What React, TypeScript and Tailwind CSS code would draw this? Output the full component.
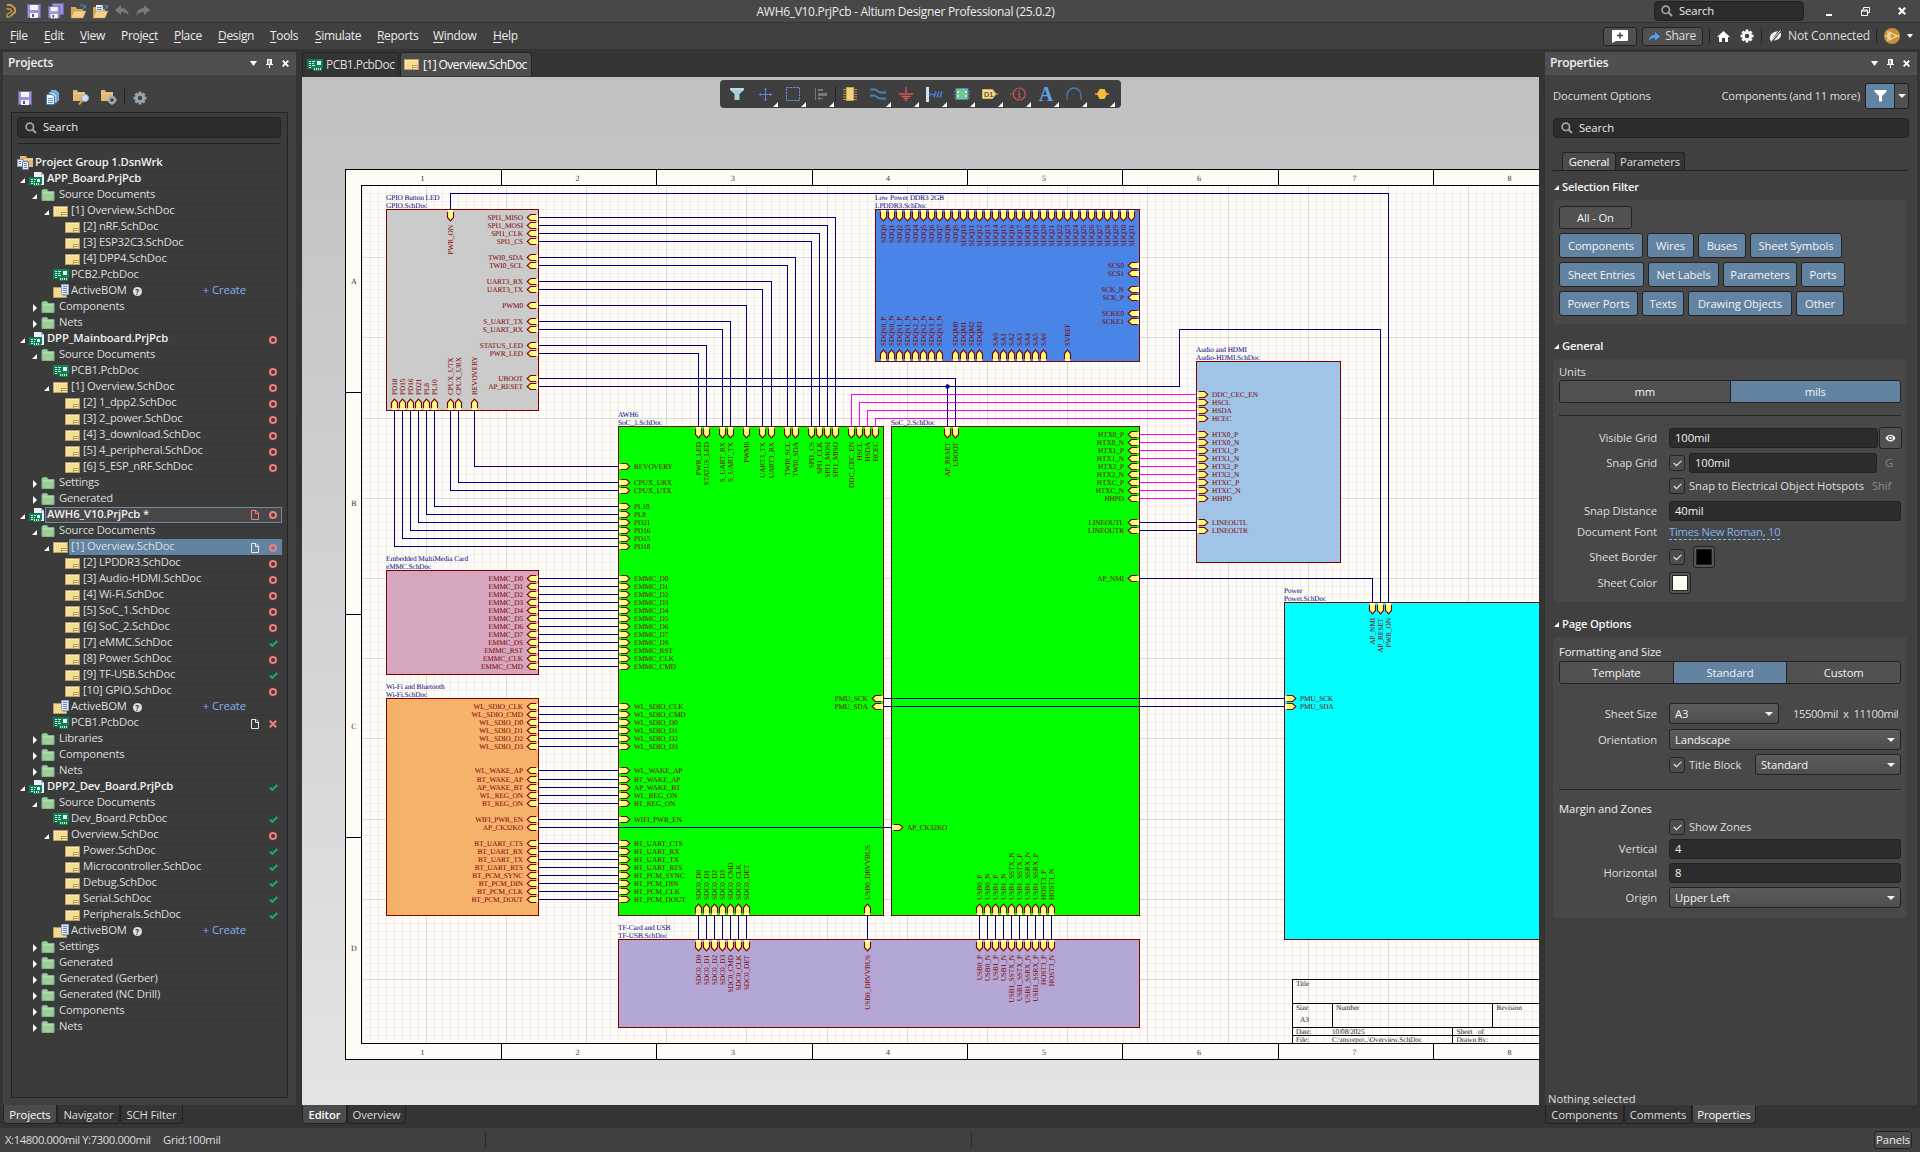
import React from "react";

/* ------------------------------------------------------------------ */
/* Schematic geometry: one unit is 100 mil, origin is the sheet corner */
/* ------------------------------------------------------------------ */
const X = (u: number) => Math.floor(346 + 8.019 * u) + 0.5;
const Y = (v: number) => Math.floor(1059.7 - 8.02 * v) + 0.5;

type Side = "L" | "R" | "T" | "B";
type Pin = [string, number];

const seq = (prefix: string, start: number, step: number, names: string[]): Pin[] =>
  names.map((n, i) => [prefix + n, start + step * i]);

const emmc = seq("EMMC_", 60, -1, ["D0", "D1", "D2", "D3", "D4", "D5", "D6", "D7", "DS", "RST", "CLK", "CMD"]);
const wifi: Pin[] = [
  ...seq("WL_SDIO_", 44, -1, ["CLK", "CMD", "D0", "D1", "D2", "D3"]),
  ["WL_WAKE_AP", 36], ["BT_WAKE_AP", 35], ["AP_WAKE_BT", 34], ["WL_REG_ON", 33], ["BT_REG_ON", 32],
  ["WIFI_PWR_EN", 30],
  ...seq("BT_", 27, -1, ["UART_CTS", "UART_RX", "UART_TX", "UART_RTS", "PCM_SYNC", "PCM_DIN", "PCM_CLK", "PCM_DOUT"]),
];
const hdmiBus: Pin[] = [["DDC_CEC_EN", 83], ["HSCL", 82], ["HSDA", 81], ["HCEC", 80]];
const hdmiTx = seq("", 78, -1, ["HTX0_P", "HTX0_N", "HTX1_P", "HTX1_N", "HTX2_P", "HTX2_N", "HTXC_P", "HTXC_N", "HHPD"]);
const line: Pin[] = [["LINEOUTL", 67], ["LINEOUTR", 66]];
const pmu: Pin[] = [["PMU_SCK", 45], ["PMU_SDA", 44]];
const sdc = seq("SDC0_", 44, 1, ["D0", "D1", "D2", "D3", "CMD", "CLK", "DET"]);
const vbus: Pin = ["USB0_DRVVBUS", 65];
const usb = seq("", 79, 1, ["USB0_P", "USB0_N", "USB1_P", "USB1_N", "USB1_SSTX_N", "USB1_SSTX_P", "USB1_SSRX_N", "USB1_SSRX_P", "HOST3_P", "HOST3_N"]);
const gpioRight: Pin[] = [
  ["SPI1_MISO", 105], ["SPI1_MOSI", 104], ["SPI1_CLK", 103], ["SPI1_CS", 102],
  ["TWI0_SDA", 100], ["TWI0_SCL", 99], ["UART3_RX", 97], ["UART3_TX", 96], ["PWM0", 94],
  ["S_UART_TX", 92], ["S_UART_RX", 91], ["STATUS_LED", 89], ["PWR_LED", 88], ["UBOOT", 85], ["AP_RESET", 84],
];
const gpioBottom: Pin[] = [
  ["PD18", 6], ["PD15", 7], ["PD16", 8], ["PD21", 9], ["PL8", 10], ["PL10", 11],
  ["CPUX_UTX", 13], ["CPUX_URX", 14], ["REVOVERY", 16],
];
const socTop: Pin[] = [
  ["PWR_LED", 44], ["STATUS_LED", 45], ["S_UART_RX", 47], ["S_UART_TX", 48], ["PWM0", 50],
  ["UART3_TX", 52], ["UART3_RX", 53], ["TWI0_SCL", 55], ["TWI0_SDA", 56],
  ["SPI1_CS", 58], ["SPI1_CLK", 59], ["SPI1_MOSI", 60], ["SPI1_MISO", 61],
];
const socLeft: Pin[] = [
  ["REVOVERY", 74], ["CPUX_URX", 72], ["CPUX_UTX", 71], ["PL10", 69], ["PL8", 68],
  ["PD21", 67], ["PD16", 66], ["PD15", 65], ["PD18", 64],
];

interface Block {
  title?: string; file: string; x: [number, number]; y: [number, number]; fill: string;
  pins: Partial<Record<Side, Pin[]>>;
}

const blocks: Block[] = [
  {
    title: "GPIO Button LED", file: "GPIO.SchDoc", x: [5, 24], y: [106, 81], fill: "#cbcbcb",
    pins: { R: gpioRight, T: [["PWR_ON", 13]], B: gpioBottom },
  },
  {
    title: "Low Power DDR3 2GB", file: "LPDDR3.SchDoc", x: [66, 99], y: [106, 87], fill: "#4985e7",
    pins: {
      T: Array.from({ length: 32 }, (_, i): Pin => ["SDQ" + i, 67 + i]),
      R: [["SCS0", 99], ["SCS1", 98], ["SCK_N", 96], ["SCK_P", 95], ["SCKE0", 93], ["SCKE1", 92]],
      B: [
        ...seq("SDQS", 67, 1, ["0_P", "0_N", "1_P", "1_N", "2_P", "2_N", "3_P", "3_N"]),
        ...seq("SDQM", 76, 1, ["0", "1", "2", "3"]),
        ...seq("SA", 81, 1, ["0", "1", "2", "3", "4", "5", "6"]),
        ["SVREF", 90],
      ],
    },
  },
  {
    title: "AWH6", file: "SoC_1.SchDoc", x: [34, 67], y: [79, 18], fill: "#00ff00",
    pins: {
      T: [...socTop, ["DDC_CEC_EN", 63], ["HSCL", 64], ["HSDA", 65], ["HCEC", 66]],
      L: [...socLeft, ...emmc, ...wifi], R: pmu, B: [...sdc, vbus],
    },
  },
  {
    file: "SoC_2.SchDoc", x: [68, 99], y: [79, 18], fill: "#00ff00",
    pins: { T: [["AP_RESET", 75], ["UBOOT", 76]], R: [...hdmiTx, ...line, ["AP_NMI", 60]], L: [["AP_CK32KO", 29]], B: usb },
  },
  {
    title: "Audio and HDMI", file: "Audio-HDMI.SchDoc", x: [106, 124], y: [87, 62], fill: "#9fc4e8",
    pins: { L: [...hdmiBus, ...hdmiTx, ...line] },
  },
  { title: "Embedded MultiMedia Card", file: "eMMC.SchDoc", x: [5, 24], y: [61, 48], fill: "#d5a6bd", pins: { R: emmc } },
  {
    title: "Wi-Fi and Bluetooth", file: "Wi-Fi.SchDoc", x: [5, 24], y: [45, 18], fill: "#f6b26b",
    pins: { R: [...wifi, ["AP_CK32KO", 29]] },
  },
  { title: "TF-Card and USB", file: "TF-USB.SchDoc", x: [34, 99], y: [15, 4], fill: "#b4a7d6", pins: { T: [...sdc, vbus, ...usb] } },
  {
    title: "Power", file: "Power.SchDoc", x: [117, 152], y: [57, 15], fill: "#00ffff",
    pins: { T: [["AP_NMI", 128], ["AP_RESET", 129], ["PWR_ON", 130]], L: pmu },
  },
];

const wire = (pts: number[][]) => pts.map(([u, v], i) => `${i ? "L" : "M"}${X(u)} ${Y(v)}`).join("");

const blueWires: string[] = [
  ...gpioRight.slice(0, 13).map(([n, v]) => wire([[24, v], [socTop.find((p) => p[0] === n)![1], v], [socTop.find((p) => p[0] === n)![1], 79]])),
  ...gpioBottom.map(([n, u]) => wire([[u, 81], [u, socLeft.find((p) => p[0] === n)![1]], [34, socLeft.find((p) => p[0] === n)![1]]])),
  ...[...emmc, ...wifi].map(([, v]) => wire([[24, v], [34, v]])),
  ...[...sdc, vbus, ...usb].map(([, u]) => wire([[u, 18], [u, 15]])),
  ...line.map(([, v]) => wire([[99, v], [106, v]])),
  ...pmu.map(([, v]) => wire([[67, v], [117, v]])),
  wire([[24, 29], [68, 29]]),
  wire([[24, 85], [76, 85], [76, 79]]),
  wire([[24, 84], [104, 84], [104, 91.1], [129, 91.1], [129, 57]]),
  wire([[75, 84], [75, 79]]),
  wire([[13, 106], [13, 108], [130, 108], [130, 57]]),
  wire([[99, 60], [128, 60], [128, 57]]),
];
const pinkWires: string[] = [
  ...hdmiBus.map(([, v], i) => wire([[106, v], [63 + i, v], [63 + i, 79]])),
  ...hdmiTx.map(([, v]) => wire([[99, v], [106, v]])),
];

function Entry({ side, name, pos, edge }: { side: Side; name: string; pos: number; edge: number }) {
  const horizontal = side === "L" || side === "R";
  const e = horizontal ? X(edge) : Y(edge);
  const p = horizontal ? Y(pos) : X(pos);
  const s = side === "L" || side === "T" ? 1 : -1;
  const pt = (along: number, across: number) =>
    horizontal ? `${e + s * along} ${p + across}` : `${p + across} ${e + s * along}`;
  const d = `M${pt(2.5, -3)}L${pt(8, -3)}L${pt(11.3, 0)}L${pt(8, 3)}L${pt(2.5, 3)}`;
  return (
    <g>
      <path d={`M${pt(0.5, 0)}L${pt(3, 0)}`} stroke="#ffff80" strokeWidth="5" />
      <path d={`M${pt(1, -2.5)}L${pt(1, 2.5)}`} stroke="#fff" />
      <path d={d} fill="#ffff80" stroke="#800000" strokeWidth="1.15" />
      {horizontal ? (
        <text x={e + s * 15.5} y={p + 2.5} textAnchor={s > 0 ? "start" : "end"} fill="#800000">{name}</text>
      ) : (
        <text transform={`translate(${p + 2.7} ${e + s * 15.5}) rotate(-90)`} textAnchor={s > 0 ? "end" : "start"} fill="#800000">{name}</text>
      )}
    </g>
  );
}

function Schematic() {
  const cols = [501.5, 656.5, 812.5, 967.5, 1122.5, 1278.5, 1433.5];
  const rows = [392.5, 614.5, 837.5];
  const minor: string[] = [];
  const major: string[] = [];
  for (let u = 2; u < 149; u++) (u % 10 ? minor : major).push(`M${X(u)} 186V1043`);
  for (let v = 3; v < 109; v++) (v % 10 ? minor : major).push(`M362 ${Y(v)}H1540`);
  return (
    <svg width="1237" height="1028" viewBox="302 77 1237 1028" className="block" fontFamily="'Liberation Serif', serif" fontSize="7.35" textRendering="geometricPrecision">
      <rect x="345" y="169" width="1260" height="891" fill="#fffcf8" />
      <g shapeRendering="crispEdges" fill="none">
        <path d={minor.join("")} stroke="#efeeea" />
        <path d={major.join("")} stroke="#dbdad6" />
        <path d="M1600 169.5H345.5V1059.5H1600M1600 185.5H361.5V1043.5H1600" stroke="#000" />
        <path d={cols.map((c) => `M${c} 169V186M${c} 1043V1060`).join("") + rows.map((r) => `M345 ${r}H362`).join("")} stroke="#000" />
      </g>
      <g fill="#333" fontSize="8" textAnchor="middle">
        {[422.5, 577.5, 733, 888, 1044, 1199, 1354.5, 1509.5].map((x, i) => (
          <g key={i}>
            <text x={x} y="180.5">{i + 1}</text>
            <text x={x} y="1054.5">{i + 1}</text>
          </g>
        ))}
        {[283.5, 506, 728.5, 951].map((y, i) => (
          <text key={i} x="353.8" y={y}>{"ABCD"[i]}</text>
        ))}
      </g>
      <g shapeRendering="crispEdges">
        {blocks.map((b) => (
          <rect key={b.file} x={X(b.x[0])} y={Y(b.y[0])} width={X(b.x[1]) - X(b.x[0])} height={Y(b.y[1]) - Y(b.y[0])} fill={b.fill} stroke="#800000" />
        ))}
      </g>
      <g shapeRendering="crispEdges" fill="none">
        <path d={blueWires.join("")} stroke="#000080" />
        <path d={pinkWires.join("")} stroke="#ff00ff" />
      </g>
      <circle cx={X(75)} cy={Y(84)} r="2.2" fill="#000080" />
      {blocks.map((b) => (
        <g key={b.file}>
          {b.title && <text x={X(b.x[0]) - 0.5} y={Y(b.y[0]) - 9.5} fill="#000080">{b.title}</text>}
          <text x={X(b.x[0]) - 0.5} y={Y(b.y[0]) - 1.7} fill="#000080">{b.file}</text>
          {(Object.keys(b.pins) as Side[]).map((side) =>
            b.pins[side]!.map(([name, pos]) => (
              <Entry key={side + pos} side={side} name={name} pos={pos} edge={side === "L" ? b.x[0] : side === "R" ? b.x[1] : side === "T" ? b.y[0] : b.y[1]} />
            ))
          )}
        </g>
      ))}
      <path
        shapeRendering="crispEdges"
        fill="none"
        stroke="#000"
        d="M1292.5 1043V979.5H1540M1292 1003.5H1540M1292 1027.5H1540M1292 1035.5H1540M1332.5 1003V1027M1492.5 1003V1027M1452.5 1027V1043"
      />
      <g fill="#222">
        <text x="1296" y="986">Title</text>
        <text x="1296" y="1010">Size</text>
        <text x="1300" y="1022">A3</text>
        <text x="1336" y="1010">Number</text>
        <text x="1496.5" y="1010">Revision</text>
        <text x="1296" y="1034">Date:</text>
        <text x="1332" y="1034">10/08/2025</text>
        <text x="1456.5" y="1034">Sheet</text>
        <text x="1478" y="1034">of</text>
        <text x="1296" y="1042">File:</text>
        <text x="1332" y="1042">C:\myrepo\..\Overview.SchDoc</text>
        <text x="1456.5" y="1042">Drawn By:</text>
      </g>
    </svg>
  );
}

/* ------------------------------- icons ------------------------------- */
const Svg = ({ w, h, children, className = "" }: { w: number; h: number; children: React.ReactNode; className?: string }) => (
  <svg width={w} height={h} viewBox={`0 0 ${w} ${h}`} className={"block shrink-0 " + className}>{children}</svg>
);

const SchIcon = () => (
  <Svg w={15} h={11}>
    <rect x=".5" y=".5" width="14" height="10" fill="#f5dc8e" stroke="#b79d63" />
    <path d="M1.5 9.5V1.5H13.5" fill="none" stroke="#fdeeb8" />
    <path d="M8 6H15V11H8Z" fill="#b79d63" />
    <path d="M9 7.5H14M9 9.5H14" stroke="#fbe7a4" />
  </Svg>
);
const PcbIcon = () => (
  <Svg w={16} h={12}>
    <path d="M0 0H16V9H15V12H6V10H0Z" fill="#0c8053" />
    <path d="M2 2.5H4M2 4.5H4M2 6.5H4M2 8.5H4M5 2.5H8M5 4.5H7M5 6.5H8" stroke="#d8f0e4" />
    <path d="M10 2H14V6H10Z" fill="#e6f4ee" />
    <path d="M7.5 9V11M9.5 9V11M11.5 9V11M13.5 9V11" stroke="#e0ead0" />
  </Svg>
);
const PrjIcon = () => (
  <Svg w={16} h={14}>
    <path d="M5 0H12L15 3V13H5Z" fill="#e9eef8" />
    <path d="M12 0V3H15Z" fill="#aab6d4" />
    <path d="M0 5H13V12H12V14H4V13H0Z" fill="#0c8053" />
    <path d="M2 7.5H4M2 9.5H4M2 11.5H4M5 7.5H7M5 9.5H6" stroke="#d8f0e4" />
    <path d="M8 7H11V10H8Z" fill="#e6f4ee" />
    <path d="M5.5 11V13M7.5 11V13M9.5 11V13" stroke="#e0ead0" />
  </Svg>
);
const FolderIcon = () => (
  <Svg w={14} h={12}>
    <path d="M1 11.5V1.5L2 .5H6L7 2.5H13V11.5Z" fill="#9bcf95" stroke="#7db58c" />
    <path d="M1.5 4H12.5" stroke="#bfe3b6" />
  </Svg>
);
const BomIcon = () => (
  <Svg w={16} h={14}>
    <path d="M.5 3.5H13.5V13.5H.5Z" fill="#f3d98b" stroke="#b79d63" />
    <path d="M9.5 11.5H13" stroke="#b79d63" />
    <path d="M8.5 .5H15.5V10.5H8.5Z" fill="#dfe8f8" stroke="#8ea3cc" />
    <path d="M10 2.5H14M10 4.5H14M10 6.5H14M10 8.5H14" stroke="#6f87b8" />
  </Svg>
);
const GroupIcon = () => (
  <Svg w={16} h={14}>
    <path d="M3 0H9L10 2H16V11H3Z" fill="#e3b872" />
    <path d="M3 3.5H16" stroke="#f4d79c" />
    <path d="M.5 3.5H6.5V10.5H.5Z" fill="#e6ebf6" stroke="#8b97b6" />
    <path d="M5.5 5.5H11.5V13.5H5.5Z" fill="#e6ebf6" stroke="#6c7ba2" />
    <path d="M7 7.5H10M7 9.5H10M7 11.5H10M2 5.5H4M2 7.5H4" stroke="#6c7ba2" />
  </Svg>
);
const Down = () => (<Svg w={5} h={5}><path d="M5 0V5H0Z" fill="#fff" /></Svg>);
const Right = () => (<Svg w={5} h={8}><path d="M1 0L5 4L1 8Z" fill="#fff" /></Svg>);
const Caret = () => (<Svg w={8} h={4}><path d="M0 0H8L4 4Z" fill="#f2f2f2" /></Svg>);
const Magnifier = () => (
  <Svg w={12} h={12}>
    <circle cx="4.8" cy="4.8" r="3.7" fill="none" stroke="#a4a4a4" strokeWidth="1.7" />
    <path d="M7.6 7.6L11 11" stroke="#a4a4a4" strokeWidth="2" />
  </Svg>
);
const FloppyBody = () => (
  <>
    <rect x=".5" y=".5" width="13" height="13" fill="#9a94d6" stroke="#6f6aa6" />
    <rect x="3" y="1" width="8" height="5" fill="#f4f4fa" />
    <rect x="3" y="9" width="8" height="5" fill="#f4f4fa" />
    <rect x="5" y="10" width="2" height="3" fill="#55507e" />
  </>
);
const Floppy = () => (<Svg w={14} h={14}><FloppyBody /></Svg>);
const Floppies = () => (
  <Svg w={16} h={16}>
    <rect x="4.5" y=".5" width="11" height="11" fill="#9a94d6" stroke="#6f6aa6" />
    <g transform="translate(0 3) scale(.88)"><FloppyBody /></g>
  </Svg>
);
const OpenFolder = ({ doc }: { doc?: boolean }) => (
  <Svg w={17} h={15}>
    <path d="M1 14V3H6L7 5H13V14Z" fill="#d9a95a" />
    {doc && <path d="M4 1H11V10H4Z" fill="#e8edf8" />}
    {doc && <path d="M5 3.5H10M5 5.5H10" stroke="#6c7ba2" />}
    <path d="M1 14L4 7H16L13 14Z" fill="#f6d38d" stroke="#c08f44" strokeWidth=".6" />
    <path d="M10 1.5C12 .5 14 1 15 3.5M15.500 1V4H12.5" fill="none" stroke="#4d8bc4" />
  </Svg>
);
const Undo = ({ flip }: { flip?: boolean }) => (
  <Svg w={14} h={12} className={flip ? "-scale-x-100" : ""}>
    <path d="M0 5L6 0V3C11 3 13.500 6 13.500 11C12 8 10 7 6 7V10Z" fill="#7a7a7a" />
  </Svg>
);
const Logo = () => (
  <Svg w={12} h={16}>
    <path d="M2 2H6L10 5.500V9L5 13.500" fill="none" stroke="#c29a4c" strokeWidth="2" />
    <path d="M1.500 6H5.500L7 8L2 11.500V14H4.500" fill="none" stroke="#c29a4c" strokeWidth="1.300" />
  </Svg>
);
const Gear = ({ color = "#f4f4f4", hole = "#404040" }: { color?: string; hole?: string }) => (
  <Svg w={14} h={14}>
    <g fill={color}>
      <circle cx="7" cy="7" r="5" />
      {[0, 45, 90, 135].map((a) => <rect key={a} x="5.600" y=".5" width="2.800" height="13" transform={`rotate(${a} 7 7)`} />)}
    </g>
    <circle cx="7" cy="7" r="2.200" fill={hole} />
  </Svg>
);
const Pages = () => (
  <Svg w={14} h={15}>
    <path d="M5 0H10L13 3V11H5Z" fill="#7db0e0" />
    <path d="M3 2H8L11 5V13H3Z" fill="#a9cdf0" stroke="#3d6ea8" strokeWidth=".6" />
    <path d="M.5 4.500H6L8.500 7V14.500H.5Z" fill="#eef5fc" stroke="#3d78b8" />
    <path d="M2 8.500H7M2 10.500H7M2 12.500H7" stroke="#5d92c8" />
  </Svg>
);
const FolderTool = ({ gear }: { gear?: boolean }) => (
  <Svg w={16} h={15}>
    <path d="M0 0H4L5 2H12V11H0Z" fill="#dfb871" />
    <path d="M0 3.500H12" stroke="#efd096" />
    {gear ? (
      <>
        <circle cx="11" cy="10" r="3" fill="#555" stroke="#9fb0b8" strokeWidth="2" />
        <path d="M11 5V15M6 10H16" stroke="#9fb0b8" strokeWidth="1.200" />
        <circle cx="11" cy="10" r="1.600" fill="#3c3c3c" />
      </>
    ) : (
      <>
        <path d="M9.500 10.500L6 14.500" stroke="#d8a04a" strokeWidth="2" />
        <circle cx="12" cy="8" r="3.600" fill="#cfe0f0" stroke="#8fa8c0" />
      </>
    )}
  </Svg>
);
const PinIcon = () => (<Svg w={7} h={9}><path d="M1 0H6V5H7V6H4V9H3V6H0V5H1Z" fill="#fff" /><path d="M3 1V5" stroke="#4f4f4f" /></Svg>);
const Cross = ({ size = 7, color = "#fff" }: { size?: number; color?: string }) => (
  <svg width={size} height={size} viewBox="0 0 7 7" className="block shrink-0"><path d="M.7 .7L6.300 6.300M6.300 .7L.7 6.300" stroke={color} strokeWidth="1.900" /></svg>
);
const Ring = () => (<Svg w={8} h={8}><circle cx="4" cy="4" r="3" fill="none" stroke="#f47c7c" strokeWidth="2" /></Svg>);
const Tick = () => (<Svg w={9} h={7}><path d="M.8 3.500L3.300 5.800L8.200 1" fill="none" stroke="#12b35b" strokeWidth="2" /></Svg>);
const Page = ({ color }: { color: string }) => (
  <Svg w={8} h={10}><path d="M.5 .5H5L7.500 3V9.500H.5ZM4.500 .5V3.500H7.500" fill="none" stroke={color} /></Svg>
);
const Funnel = ({ color = "#fff" }: { color?: string }) => (<Svg w={13} h={12}><path d="M.5 0H12.500V1.500L8 6V11.500H5V6L.5 1.500Z" fill={color} /></Svg>);
const CheckMark = () => (<Svg w={9} h={7}><path d="M.8 3L3.500 5.700L8.300 .9" fill="none" stroke="#e8e8e8" strokeWidth="1.200" /></Svg>);

/* ---------------------------- project tree ---------------------------- */
type Kind = "group" | "prj" | "folder" | "sch" | "pcb" | "bom";
interface Node { n: number; k: Kind; t: string; s?: "o" | "v" | "x"; a?: "d" | "r"; page?: string; sel?: "outline" | "fill" }

const S = (n: number, t: string, s?: Node["s"], extra: Partial<Node> = {}): Node => ({ n, k: "sch", t, s, ...extra });
const F = (t: string, a: "d" | "r" = "r"): Node => ({ n: 2, k: "folder", t, a });
const BOM: Node = { n: 3, k: "bom", t: "ActiveBOM" };

const tree: Node[] = [
  { n: 0, k: "group", t: "Project Group 1.DsnWrk" },
  { n: 1, k: "prj", t: "APP_Board.PrjPcb", a: "d" },
  F("Source Documents", "d"),
  S(3, "[1] Overview.SchDoc", undefined, { a: "d" }),
  S(4, "[2] nRF.SchDoc"), S(4, "[3] ESP32C3.SchDoc"), S(4, "[4] DPP4.SchDoc"),
  { n: 3, k: "pcb", t: "PCB2.PcbDoc" },
  BOM, F("Components"), F("Nets"),
  { n: 1, k: "prj", t: "DPP_Mainboard.PrjPcb", a: "d", s: "o" },
  F("Source Documents", "d"),
  { n: 3, k: "pcb", t: "PCB1.PcbDoc", s: "o" },
  S(3, "[1] Overview.SchDoc", "o", { a: "d" }),
  S(4, "[2] 1_dpp2.SchDoc", "o"), S(4, "[3] 2_power.SchDoc", "o"), S(4, "[4] 3_download.SchDoc", "o"),
  S(4, "[5] 4_peripheral.SchDoc", "o"), S(4, "[6] 5_ESP_nRF.SchDoc", "o"),
  F("Settings"), F("Generated"),
  { n: 1, k: "prj", t: "AWH6_V10.PrjPcb *", a: "d", s: "o", page: "#f47c7c", sel: "outline" },
  F("Source Documents", "d"),
  S(3, "[1] Overview.SchDoc", "o", { a: "d", page: "#e8e8e8", sel: "fill" }),
  S(4, "[2] LPDDR3.SchDoc", "o"), S(4, "[3] Audio-HDMI.SchDoc", "o"), S(4, "[4] Wi-Fi.SchDoc", "o"),
  S(4, "[5] SoC_1.SchDoc", "o"), S(4, "[6] SoC_2.SchDoc", "o"), S(4, "[7] eMMC.SchDoc", "v"),
  S(4, "[8] Power.SchDoc", "o"), S(4, "[9] TF-USB.SchDoc", "v"), S(4, "[10] GPIO.SchDoc", "o"),
  BOM,
  { n: 3, k: "pcb", t: "PCB1.PcbDoc", s: "x", page: "#e8e8e8" },
  F("Libraries"), F("Components"), F("Nets"),
  { n: 1, k: "prj", t: "DPP2_Dev_Board.PrjPcb", a: "d", s: "v" },
  F("Source Documents", "d"),
  { n: 3, k: "pcb", t: "Dev_Board.PcbDoc", s: "v" },
  S(3, "Overview.SchDoc", "o", { a: "d" }),
  S(4, "Power.SchDoc", "v"), S(4, "Microcontroller.SchDoc", "v"), S(4, "Debug.SchDoc", "v"),
  S(4, "Serial.SchDoc", "v"), S(4, "Peripherals.SchDoc", "v"),
  BOM, F("Settings"), F("Generated"), F("Generated (Gerber)"), F("Generated (NC Drill)"), F("Components"), F("Nets"),
];

const indent = ["pl-[5px]", "pl-2", "pl-5", "pl-8", "pl-11"];
const icons: Record<Kind, React.ReactNode> = {
  group: <GroupIcon />, prj: <PrjIcon />, folder: <FolderIcon />, sch: <SchIcon />, pcb: <PcbIcon />, bom: <BomIcon />,
};

function TreeRow({ node, first }: { node: Node; first: boolean }) {
  const bold = node.k === "group" || node.k === "prj";
  const look =
    node.sel === "fill" ? "border-t border-[#6383a3] bg-[#6383a3]" :
    node.sel === "outline" ? "border border-[#6c8caa] bg-[#484848]" :
    first ? "border-t border-transparent" : "border-t border-[#343434]";
  return (
    <div className={"flex h-4 items-center " + indent[node.n]}>
      {node.n > 0 && <span className="flex w-[9px] shrink-0 pt-[2px]">{node.a === "d" ? <Down /> : node.a === "r" ? <Right /> : null}</span>}
      <span className="w-4 shrink-0">{icons[node.k]}</span>
      <div className={"mr-[5px] flex h-4 min-w-0 flex-1 items-center " + (node.sel === "outline" ? "pl-px " : "pl-[2px] ") + look}>
        <span className={"-mt-[3px] leading-4 " + (bold ? "font-semibold text-[#f0f0f0] tracking-[-0.13px]" : "tracking-[-0.2px]")}>{node.t}</span>
        {node.k === "bom" && (
          <>
            <span className="ml-1.5 flex size-[9px] items-center justify-center rounded-full bg-[#e0e0e0] text-[8px] font-bold leading-none text-[#333]">?</span>
            <span className="-mt-[3px] ml-auto mr-9 leading-4 text-[#7fb4ee]">+&nbsp;Create</span>
          </>
        )}
        {node.s && (
          <span className="ml-auto flex items-center">
            {node.page && <Page color={node.page} />}
            <span className={"ml-2 flex w-[12px] justify-center " + (node.sel === "outline" ? "mr-[2px]" : "mr-[3px]")}>
              {node.s === "o" ? <Ring /> : node.s === "v" ? <Tick /> : <Cross size={8} color="#f47c7c" />}
            </span>
          </span>
        )}
      </div>
    </div>
  );
}

/* ------------------------------- panels ------------------------------- */
const PanelHeader = ({ title }: { title: string }) => (
  <div className="flex h-[23px] shrink-0 items-center bg-[#4f4f4f] pl-[5px] pr-[7px] font-semibold text-[#f0f0f0]">
    <span className="-mt-[2px] text-[12px] tracking-[-0.2px]">{title}</span>
    <span className="ml-auto flex items-center gap-[9px]">
      <Svg w={7} h={5}><path d="M0 0H7L3.500 5Z" fill="#fff" /></Svg>
      <PinIcon />
      <Cross />
    </span>
  </div>
);

const BottomTabs = ({ tabs, active }: { tabs: [string, string][]; active: number }) => (
  <div className="flex h-5 shrink-0">
    {tabs.map(([t, w], i) => (
      <span key={t} className={"flex h-[19px] items-center justify-center rounded-b border border-t-0 border-[#222] pt-[2px] leading-none " + w + (i === active ? " bg-[#4b4b4b] text-white" : " bg-[#343434]")}>
        {t}
      </span>
    ))}
  </div>
);

const SearchBox = ({ className }: { className: string }) => (
  <div className={"flex items-center rounded border border-[#222] bg-[#2c2c2c] " + className}>
    <Magnifier />
    <span className="-mt-px ml-[6px] text-[#ececec]">Search</span>
  </div>
);

function ProjectsPanel() {
  return (
    <div className="flex w-[293px] shrink-0 flex-col">
      <div className="flex h-[1053px] flex-col bg-[#404040]">
        <PanelHeader title="Projects" />
        <div className="flex h-[30px] shrink-0 items-end pl-[15px]">
          <Floppy />
          <span className="ml-[14px]"><Pages /></span>
          <span className="ml-[13px]"><FolderTool /></span>
          <span className="ml-3"><FolderTool gear /></span>
          <span className="mx-[7px] h-4 w-px bg-[#242424]" />
          <span className="ml-px"><Gear color="#98a4ac" hole="#404040" /></span>
        </div>
        <div className="ml-2 mr-2 mt-[7px] h-[986px] w-[277px] shrink-0 border border-[#232323] bg-[#3b3b3b]">
          <SearchBox className="mx-[5px] mt-1 h-[21px] w-[264px] pl-[7px]" />
          <div className="mx-[6px] mb-[11px] mt-[5px] h-px bg-[#222]" />
          {tree.map((n, i) => <TreeRow key={i} node={n} first={i === 0} />)}
        </div>
      </div>
      <BottomTabs tabs={[["Projects", "w-[54px]"], ["Navigator", "w-[63px]"], ["SCH Filter", "w-[63px]"]]} active={0} />
    </div>
  );
}

/* ------------------------------- toolbar ------------------------------- */
const tools: React.ReactNode[] = [
  <Svg w={14} h={12}><path d="M0 0H14V2L9.500 6V12H4.500V6L0 2Z" fill="#a9d0d8" /><path d="M1 1H13" stroke="#d6eef2" /></Svg>,
  <Svg w={13} h={13}><path d="M6.500 0V13M0 6.500H13" stroke="#5b8cd8" /><path d="M5 2L6.500 .5L8 2M5 11L6.500 12.500L8 11M2 5L.5 6.500L2 8M11 5L12.500 6.500L11 8" fill="none" stroke="#5b8cd8" strokeWidth=".7" /></Svg>,
  <Svg w={14} h={14}><rect x=".5" y=".5" width="13" height="13" fill="none" stroke="#6f98e4" strokeDasharray="2.200 1.050" /></Svg>,
  <Svg w={14} h={14}><path d="M1.500 1V13" stroke="#7a7a7a" /><path d="M4 2H9V4H4ZM4 6H13V9H4Z" fill="#7a7a7a" /><path d="M4 11.500H9M6 10L4 11.500L6 13" fill="none" stroke="#7a7a7a" /></Svg>,
  <Svg w={14} h={14}><path d="M0 2.500H14M0 5H14M0 7.500H14M0 10H14M0 12.500H14" stroke="#b0945a" /><rect x="3.500" y=".5" width="7" height="13" fill="#f2d27c" stroke="#c9a64e" /></Svg>,
  <Svg w={16} h={12}><path d="M0 1.500H5C7 1.500 8 4.500 10 4.500H16M0 7.500H4C6 7.500 8 10.500 10 10.500H16" fill="none" stroke="#4c80b4" strokeWidth="1.800" /></Svg>,
  <Svg w={16} h={14}><path d="M8 0V6M1 7H15M3.500 9.500H12.500M5.500 11.500H10.500M7 13.500H9" stroke="#d95a50" strokeWidth="1.300" /></Svg>,
  <Svg w={17} h={15}><path d="M0 0H3V15H0Z" fill="#cfe0fa" /><path d="M3 6C5 6 4 7.500 6 7.500C4 7.500 5 9 3 9M6 7.500H8" fill="none" stroke="#5b8cd8" /><path d="M8 10.500L10 4.500M11 10.500L13 4.500M14 10.500L16 4.500" stroke="#4a7de0" strokeWidth="1.500" /></Svg>,
  <Svg w={16} h={12}><path d="M0 3.500H16M0 6.500H16M0 9.500H16" stroke="#4f7ec8" /><rect x="2" y=".5" width="12" height="11" fill="#6fc896" stroke="#4f86c8" /><path d="M3 3H5V5H3ZM3 7H5V9H3ZM11 3H13V5H11ZM11 7H13V9H11Z" fill="#f0e67c" /></Svg>,
  <Svg w={16} h={10}><path d="M.5 .5H10.500L14 5L10.500 9.500H.5Z" fill="#f2dc9c" stroke="#d2b25c" /><path d="M14 5H16" stroke="#d2b25c" /><text x="2" y="7.800" fontSize="7.500" fontWeight="700" fontFamily="Liberation Sans, sans-serif" fill="#7a5a1c">D1</text></Svg>,
  <Svg w={16} h={14}><path d="M0 7H3" stroke="#cc5252" /><circle cx="9.300" cy="7" r="6" fill="none" stroke="#cc5252" strokeWidth="1.200" /><path d="M9.300 3V4.500M9.300 6V10.500M8 10.500H10.800M8 6H9.300" stroke="#cc5252" strokeWidth="1.200" /></Svg>,
  <span className="font-['Liberation_Serif',serif] text-[20px] font-bold leading-[14px] tracking-normal text-[#62a4ec]">A</span>,
  <Svg w={16} h={14}><path d="M1 12.500V8.500A7 7.500 0 0 1 15 8.500V12.500" fill="none" stroke="#4a7cb0" strokeWidth="1.300" /></Svg>,
  <Svg w={14} h={12}><path d="M0 6H14" stroke="#e07c2c" strokeWidth="2" /><path d="M4.500 1H9.500L12 6L9.500 11H4.500L2 6Z" fill="#f6bc42" /></Svg>,
];

const Toolbar = () => (
  <div className="absolute left-[418px] top-[3px] flex h-7 w-[401px] items-center rounded bg-[#3f3f3f] pl-[3px]">
    {tools.map((icon, i) => (
      <React.Fragment key={i}>
        {i === 4 && <span className="h-4 w-px bg-[#222]" />}
        <span className="relative flex h-7 w-7 items-center justify-center">
          {icon}
          {i !== 0 && i !== 4 && <span className="absolute bottom-[1px] right-[1px]"><Down /></span>}
        </span>
      </React.Fragment>
    ))}
  </div>
);

/* ---------------------------- properties form ---------------------------- */
const Chip = ({ t, w }: { t: string; w: string }) => (
  <span className={"flex h-[25px] items-center justify-center rounded-[3px] border border-[#222] bg-[#6383a3] text-[#f2f2f2] " + w}>{t}</span>
);
const Section = ({ t, className }: { t: string; className: string }) => (
  <div className={"flex shrink-0 items-center pl-[1px] font-semibold text-[#f4f4f4] " + className}>
    <Down />
    <span className="ml-[3px] tracking-[-0.22px]">{t}</span>
  </div>
);
const Row = ({ label, className, children }: { label?: string; className: string; children: React.ReactNode }) => (
  <div className={"flex items-center " + className}>
    <span className="w-[98px] shrink-0 text-right">{label}</span>
    <span className="w-3 shrink-0" />
    {children}
  </div>
);
const Input = ({ v, w }: { v: string; w: string }) => (
  <span className={"flex h-5 items-center rounded-[3px] border border-[#222] bg-[#2c2c2c] pl-[5px] text-[#f0f0f0] " + w}>{v}</span>
);
const Select = ({ v, w }: { v: string; w: string }) => (
  <span className={"flex h-[21px] items-center justify-between rounded-[3px] border border-[#222] bg-gradient-to-b from-[#5c5c5c] to-[#4e4e4e] pl-[5px] pr-[5px] text-[#f4f4f4] " + w}>
    {v}<Caret />
  </span>
);
const Check = () => (
  <span className="flex size-4 shrink-0 items-center justify-center rounded-[3px] border border-[#242424] bg-[#4d4d4d]"><CheckMark /></span>
);
const Swatch = ({ c }: { c: string }) => (
  <span className="flex size-[22px] items-center justify-center rounded-[3px] border border-[#222] bg-[#555]">
    <span className={"size-4 border border-[#222] " + c} />
  </span>
);
const Segments = ({ items, active, className }: { items: string[]; active: number; className: string }) => (
  <div className={"flex w-[342px] overflow-hidden rounded-[3px] border border-[#222] " + className}>
    {items.map((t, i) => (
      <span key={t} className={"flex flex-1 items-center justify-center text-[#f4f4f4] " + (i ? "border-l border-[#222] " : "") + (i === active ? "bg-[#6383a3]" : "bg-[#515151]")}>{t}</span>
    ))}
  </div>
);

function PropertiesPanel() {
  return (
    <div className="flex w-[372px] shrink-0 flex-col">
      <div className="flex h-[1053px] flex-col bg-[#404040]">
        <PanelHeader title="Properties" />
        <div className="mt-2 flex h-[26px] shrink-0 items-center pl-2 pr-2">
          <span>Document Options</span>
          <span className="ml-auto mr-[5px] tracking-[-0.22px]">Components (and 11 more)</span>
          <span className="flex h-[26px] w-[30px] items-center justify-center rounded-l-[3px] border border-[#222] bg-[#6383a3]"><Funnel /></span>
          <span className="flex h-[26px] w-[14px] items-center justify-center rounded-r-[3px] border border-l-0 border-[#222] bg-[#505050]"><Caret /></span>
        </div>
        <SearchBox className="ml-2 mt-[9px] h-5 w-[356px] shrink-0 pl-[7px]" />
        <div className="ml-2 mt-[14px] flex h-[19px] w-[354px] shrink-0 border-b border-[#222] pl-[9px]">
          <span className="flex w-[54px] items-center justify-center rounded-t-[3px] border border-b-0 border-[#222] bg-[#4b4b4b] text-white">General</span>
          <span className="-ml-px flex w-[70px] items-center justify-center rounded-t-[3px] border border-b-0 border-[#222] bg-[#343434]">Parameters</span>
        </div>

        <Section t="Selection Filter" className="ml-2 mt-[7px] h-[18px]" />
        <div className="ml-2 mt-[4px] flex h-[124px] w-[354px] shrink-0 flex-col gap-1 rounded bg-[#484848] pl-[6px] pt-[6px] tracking-[-0.14px]">
          <span className="flex h-[23px] w-[73px] items-center justify-center rounded-[3px] border border-[#222] bg-[#515151] text-[#f4f4f4]">All - On</span>
          <div className="flex gap-1">
            <Chip t="Components" w="w-[84px]" /><Chip t="Wires" w="w-[47px]" /><Chip t="Buses" w="w-[48px]" /><Chip t="Sheet Symbols" w="w-[92px]" />
          </div>
          <div className="flex gap-1">
            <Chip t="Sheet Entries" w="w-[85px]" /><Chip t="Net Labels" w="w-[71px]" /><Chip t="Parameters" w="w-[74px]" /><Chip t="Ports" w="w-[44px]" />
          </div>
          <div className="flex gap-1">
            <Chip t="Power Ports" w="w-[79px]" /><Chip t="Texts" w="w-[42px]" /><Chip t="Drawing Objects" w="w-[104px]" /><Chip t="Other" w="w-[48px]" />
          </div>
        </div>

        <Section t="General" className="ml-2 mt-[13px] h-[18px]" />
        <div className="ml-2 mt-[4px] h-[243px] w-[354px] shrink-0 rounded bg-[#484848] pl-[6px] pt-[6px]">
          <div className="h-[15px] leading-[14px]">Units</div>
          <Segments items={["mm", "mils"]} active={1} className="h-[23px]" />
          <div className="mt-[12px] h-px w-[342px] bg-[#262626]" />
          <Row label="Visible Grid" className="mt-[11px] h-[22px]">
            <Input v="100mil" w="w-[209px]" />
            <span className="ml-[1px] flex h-[22px] w-[23px] items-center justify-center rounded-[3px] border border-[#222] bg-[#515151]">
              <Svg w={11} h={8}><path d="M.5 4C3-.5 8-.5 10.500 4C8 8.500 3 8.500 .5 4Z" fill="#fff" /><circle cx="5.500" cy="4" r="2.300" fill="#444" /><circle cx="5.500" cy="4" r="1.200" fill="#fff" /></Svg>
            </span>
          </Row>
          <Row label="Snap Grid" className="mt-1 h-5">
            <Check />
            <span className="w-1" />
            <Input v="100mil" w="w-[188px]" />
            <span className="ml-2 text-[#8a8a8a]">G</span>
          </Row>
          <Row className="mt-[5px] h-4">
            <Check />
            <span className="ml-1 whitespace-nowrap tracking-[-0.06px]">Snap to Electrical Object Hotspots</span>
            <span className="ml-2 text-[#8a8a8a]">Shif</span>
          </Row>
          <Row label="Snap Distance" className="mt-[7px] h-5"><Input v="40mil" w="w-[232px]" /></Row>
          <Row label="Document Font" className="mt-[3px] h-4">
            <span className="border-b border-dashed border-[#7fb4ee] leading-[14px] tracking-[-0.27px] text-[#7fb4ee]">Times New Roman, 10</span>
          </Row>
          <Row label="Sheet Border" className="mt-[6px] h-[22px]">
            <Check />
            <span className="w-2" />
            <Swatch c="bg-black" />
          </Row>
          <Row label="Sheet Color" className="mt-1 h-[22px]"><Swatch c="bg-[#fffcf8]" /></Row>
        </div>

        <Section t="Page Options" className="ml-2 mt-[13px] h-[18px]" />
        <div className="ml-2 mt-[4px] h-[281px] w-[354px] shrink-0 rounded bg-[#484848] pl-[6px] pt-[8px]">
          <div className="h-4 leading-[14px] text-[#f0f0f0]">Formatting and Size</div>
          <Segments items={["Template", "Standard", "Custom"]} active={1} className="h-[23px]" />
          <Row label="Sheet Size" className="mt-[19px] h-[21px]">
            <Select v="A3" w="w-[110px]" />
            <span className="ml-[14px] whitespace-nowrap tracking-[-0.42px]">15500mil&nbsp; x&nbsp; 11100mil</span>
          </Row>
          <Row label="Orientation" className="mt-[5px] h-[21px]"><Select v="Landscape" w="w-[232px]" /></Row>
          <Row className="mt-1 h-[21px]">
            <Check />
            <span className="ml-1 w-[66px]">Title Block</span>
            <Select v="Standard" w="w-[146px]" />
          </Row>
          <div className="mt-[14px] h-px w-[342px] bg-[#262626]" />
          <div className="mt-[12px] h-[17px] leading-[14px] text-[#f0f0f0]">Margin and Zones</div>
          <Row className="h-4"><Check /><span className="ml-1">Show Zones</span></Row>
          <Row label="Vertical" className="mt-1 h-5"><Input v="4" w="w-[232px]" /></Row>
          <Row label="Horizontal" className="mt-1 h-5"><Input v="8" w="w-[232px]" /></Row>
          <Row label="Origin" className="mt-1 h-[21px]"><Select v="Upper Left" w="w-[232px]" /></Row>
        </div>
        <div className="mb-[-1px] mt-auto pl-[3px] leading-[14px] tracking-[-0.05px]">Nothing selected</div>
      </div>
      <BottomTabs tabs={[["Components", "w-[79px]"], ["Comments", "w-[68px]"], ["Properties", "w-[64px]"]]} active={2} />
    </div>
  );
}

/* -------------------------------- frame -------------------------------- */
const menus: [string, string, string, string][] = [
  ["", "F", "ile", "w-[34px]"], ["", "E", "dit", "w-[36px]"], ["", "V", "iew", "w-[41px]"], ["Proje", "c", "t", "w-[53px]"],
  ["", "P", "lace", "w-[44px]"], ["", "D", "esign", "w-[52px]"], ["", "T", "ools", "w-[45px]"], ["", "S", "imulate", "w-[62px]"],
  ["", "R", "eports", "w-[56px]"], ["", "W", "indow", "w-[60px]"], ["", "H", "elp", "w-[40px]"],
];

const Separator = () => <span className="block h-[14px] w-px bg-[#222]" />;

function TitleBar() {
  return (
    <div className="grid h-[22px] shrink-0 grid-cols-[1fr_auto_1fr] items-center bg-[#484848]">
      <div className="flex items-center pl-[5px]">
        <Logo />
        <span className="ml-[10px]"><Floppy /></span>
        <span className="ml-[7px]"><Floppies /></span>
        <span className="ml-[6px]"><OpenFolder /></span>
        <span className="ml-[5px]"><OpenFolder doc /></span>
        <span className="ml-[6px]"><Undo /></span>
        <span className="ml-[7px]"><Undo flip /></span>
      </div>
      <span className="-ml-[109px] mt-[2px] text-[12px] tracking-[-0.3px] text-[#ececec]">AWH6_V10.PrjPcb - Altium Designer Professional (25.0.2)</span>
      <div className="flex items-center justify-end pr-[14px]">
        <SearchBox className="mr-[22px] h-5 w-[150px] pl-[6px]" />
        <Svg w={6} h={10}><path d="M0 9H6" stroke="#fff" strokeWidth="2" /></Svg>
        <span className="ml-[29px] mr-7"><Svg w={9} h={9}><path d="M2.500 2.500V.5H8.500V5.500H6.500M.5 3H6.500V8.500H.5ZM.5 4H6.500" fill="none" stroke="#fff" /></Svg></span>
        <Cross size={8} />
      </div>
    </div>
  );
}

function MenuBar() {
  return (
    <div className="flex h-[27px] shrink-0 items-center border-t border-[#343434] bg-[#404040] pl-[10px]">
      {menus.map(([a, b, c, w]) => (
        <span key={a + b + c} className={"text-[12px] tracking-[-0.32px] text-[#ececec] " + w}>
          {a}<span className="underline underline-offset-2">{b}</span>{c}
        </span>
      ))}
      <div className="ml-auto flex items-center pr-[7px]">
        <span className="flex h-[19px] w-[34px] items-center justify-center rounded-[3px] border border-[#222] bg-[#505050]">
          <Svg w={16} h={13}><path d="M1 0H15Q16 0 16 1V10Q16 11 15 11H4L0 13V1Q0 0 1 0Z" fill="#fff" /><path d="M8 2.500V8.500M5 5.500H11" stroke="#444" strokeWidth="1.500" /></Svg>
        </span>
        <span className="ml-[5px] flex h-[19px] w-[61px] items-center justify-center gap-[5px] rounded-[3px] border border-[#222] bg-[#505050] text-[12px] tracking-[-0.3px]">
          <Svg w={11} h={9}><path d="M0 9C0 4.500 3 3 6 3V0L11 4.500L6 8.500V5.800C3.500 5.800 1.500 6.500 0 9Z" fill="#4da3f0" /></Svg>
          Share
        </span>
        <span className="ml-[6px] mr-[7px]"><Separator /></span>
        <Svg w={13} h={11}><path d="M6.500 0L13 6H11V11H8V7H5V11H2V6H0Z" fill="#fff" /></Svg>
        <span className="ml-[10px]"><Gear /></span>
        <span className="ml-[7px] mr-[7px]"><Separator /></span>
        <Svg w={13} h={12}><path d="M1 7C2 3 5 2 9 1L2 11C1 10 .5 9 1 7Z" fill="#fff" /><path d="M12 3C12.500 8 9 10 5 10.500L11 3Z" fill="#fff" /><path d="M11.500 .5L2 11.500" stroke="#fff" /></Svg>
        <span className="ml-[6px] whitespace-nowrap text-[12px] tracking-[-0.16px]">Not Connected</span>
        <span className="ml-[6px] mr-[7px]"><Separator /></span>
        <Svg w={16} h={16}><circle cx="8" cy="8" r="8" fill="#c98f38" /><path d="M4 3V13M1 8H6M6 4.500V11.500L13 8ZM13 8H15M4 6H6M4 10H6" fill="none" stroke="#fbe6bc" strokeWidth="1.100" /></Svg>
        <span className="ml-[7px]"><Svg w={6} h={4}><path d="M0 0H6L3 4Z" fill="#fff" /></Svg></span>
      </div>
    </div>
  );
}

function Editor() {
  return (
    <div className="flex min-w-0 flex-1 flex-col px-[6px]">
      <div className="flex h-[25px] shrink-0 items-start">
        <span className="flex h-6 w-[97px] items-center rounded-t border border-b-0 border-[#242424] bg-[#343434] pl-1">
          <PcbIcon /><span className="ml-[3px] whitespace-nowrap text-[12px] tracking-[-0.56px]">PCB1.PcbDoc</span>
        </span>
        <span className="ml-px flex h-6 w-[132px] items-center rounded-t border border-b-0 border-[#242424] bg-[#4d4d4d] pl-[3px] text-white">
          <SchIcon /><span className="ml-[4px] whitespace-nowrap text-[12px] tracking-[-0.56px]">[1] Overview.SchDoc</span>
        </span>
      </div>
      <div className="relative h-[1028px] w-[1237px] bg-gradient-to-b from-[#c1c1c1] to-[#e4e4e4]">
        <Schematic />
        <Toolbar />
      </div>
      <BottomTabs tabs={[["Editor", "w-[45px] font-semibold"], ["Overview", "w-[59px]"]]} active={0} />
    </div>
  );
}

export default function App() {
  return (
    <div className="flex h-[1152px] w-[1920px] flex-col overflow-hidden bg-[#343434] font-['Open_Sans',sans-serif] text-[11.25px] leading-4 tracking-[-0.1px] text-[#dedede]">
      <TitleBar />
      <MenuBar />
      <div className="flex h-[1079px] shrink-0 pl-[3px] pr-[3px] pt-[3px]">
        <ProjectsPanel />
        <Editor />
        <PropertiesPanel />
      </div>
      <div className="flex h-6 shrink-0 items-center bg-[#404040] pl-[5px] pr-2">
        <span className="w-[158px] whitespace-pre tracking-[-0.38px]">X:14800.000mil Y:7300.000mil</span>
        <span className="w-[322px] tracking-[-0.3px]">Grid:100mil</span>
        <span className="h-4 w-px bg-[#2a2a2a]" />
        <span className="ml-[485px] h-4 w-px bg-[#2a2a2a]" />
        <span className="ml-auto flex h-[18px] w-[38px] items-center justify-center rounded-[3px] border border-[#222] bg-[#4b4b4b] text-[#f0f0f0]">Panels</span>
      </div>
    </div>
  );
}
